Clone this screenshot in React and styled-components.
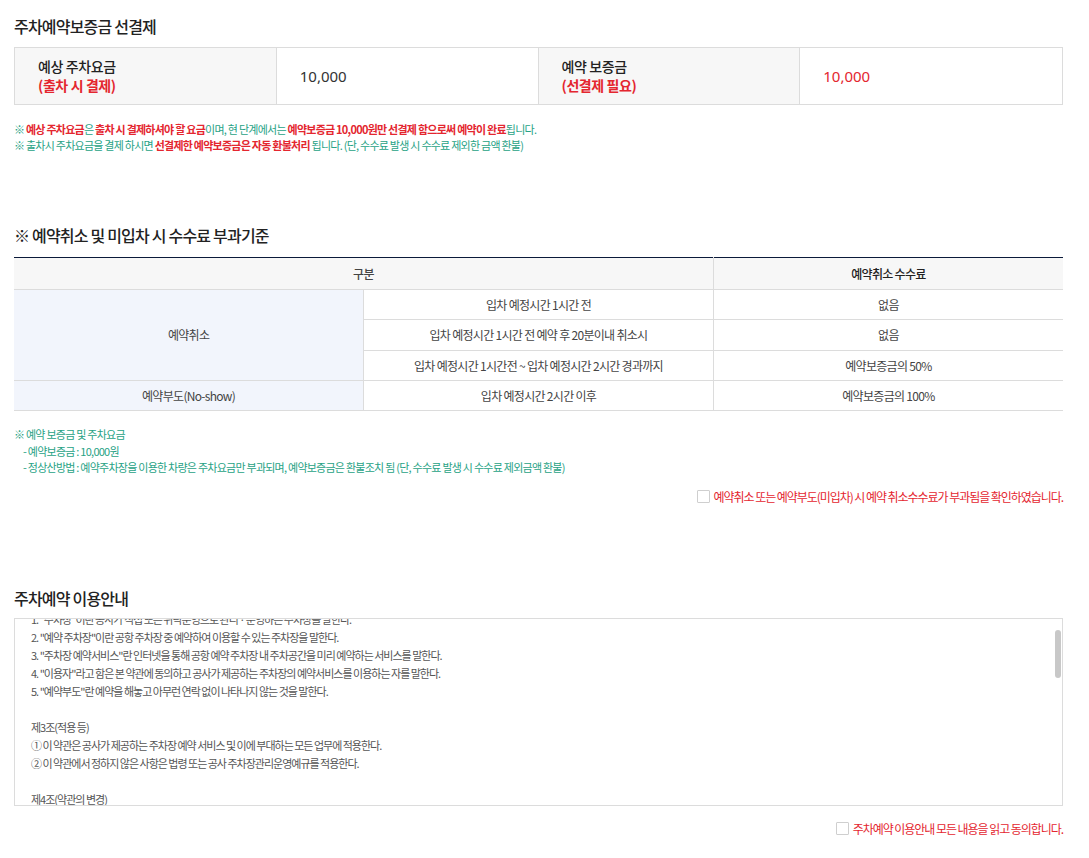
import { useLayoutEffect, useRef } from "react";
import styled, { createGlobalStyle } from "styled-components";

const GlobalStyle = createGlobalStyle`
  html, body {
    margin: 0;
    padding: 0;
    background: #fff;
  }
  body {
    font-family: "Noto Sans CJK KR", "Noto Sans", sans-serif;
    color: #222;
  }
`;

const RED = "#e4262f";
const GREEN = "#27a285";

const Page = styled.div`
  width: 1049px;
  padding: 15px 26px 20px 14px;
`;

const SectionTitle = styled.h2`
  margin: ${(p) => p.$top || 0}px 0 0;
  font-size: 16px;
  font-weight: 500;
  line-height: 22px;
  color: #222;
  letter-spacing: -0.8px;
`;

const PayTable = styled.div`
  margin-top: 10px;
  display: grid;
  grid-template-columns: repeat(4, 1fr);
  border: 1px solid #dcdcdc;
  height: 56px;
`;

const PayLabel = styled.div`
  background: #f7f7f7;
  border-right: 1px solid #dcdcdc;
  padding-left: 23px;
  display: flex;
  flex-direction: column;
  justify-content: center;
  font-size: 14px;
  line-height: 19px;
  color: #222;
  font-weight: 500;
  letter-spacing: -0.4px;
`;

const PayLabelSub = styled.span`
  color: ${RED};
  font-weight: 700;
`;

const PayValue = styled.div`
  padding-left: 23px;
  display: flex;
  align-items: center;
  font-size: 15px;
  color: ${(p) => (p.$red ? RED : "#333")};
  border-right: ${(p) => (p.$last ? "none" : "1px solid #dcdcdc")};
  font-family: "Noto Sans", sans-serif;
`;

const NoteBlock = styled.div`
  margin-top: ${(p) => p.$top || 0}px;
  font-size: 11px;
  line-height: ${(p) => p.$lh || 16}px;
  color: ${GREEN};
  letter-spacing: -0.75px;
`;

const NoteLine = styled.div`
  padding-left: ${(p) => (p.$indent ? 9 : 0)}px;
`;

const Em = styled.span`
  color: ${RED};
  font-weight: 700;
`;

const FeeTable = styled.table`
  margin-top: 11px;
  width: 100%;
  border-collapse: collapse;
  table-layout: fixed;
  border-top: 1px solid #0b1a3a;
  font-size: 12px;
  color: #444;
  letter-spacing: -0.7px;
`;

const Th = styled.th`
  height: 31px;
  background: #f7f7f7;
  font-weight: 500;
  color: ${(p) => (p.$strong ? "#222" : "#444")};
  border-bottom: 1px solid #dcdcdc;
  border-left: ${(p) => (p.$divider ? "1px solid #dcdcdc" : "none")};
  padding: 0;
`;

const Td = styled.td`
  height: 29.3px;
  text-align: center;
  padding: 0;
  border-bottom: 1px solid #dcdcdc;
  border-left: ${(p) => (p.$divider ? "1px solid #dcdcdc" : "none")};
  background: ${(p) => (p.$head ? "#f2f5fc" : "#fff")};
`;

const AgreeRow = styled.label`
  margin-top: ${(p) => p.$top || 0}px;
  display: flex;
  justify-content: flex-end;
  align-items: center;
  gap: 4px;
  font-size: 12px;
  color: ${RED};
  letter-spacing: -1.05px;
  cursor: pointer;
`;

const CheckBox = styled.input.attrs({ type: "checkbox" })`
  appearance: none;
  margin: 0;
  width: 13px;
  height: 13px;
  border: 1px solid #cfcfcf;
  background: #fff;
  border-radius: 1px;
`;

const TermsWrap = styled.div`
  position: relative;
  margin-top: 9px;
`;

const TermsBox = styled.div`
  box-sizing: border-box;
  height: 188px;
  border: 1px solid #dcdcdc;
  overflow-y: auto;
  padding: 10px 16px 10px;
  font-size: 11px;
  line-height: 18px;
  color: #555;
  letter-spacing: -1px;
  scrollbar-width: none;
  &::-webkit-scrollbar {
    display: none;
  }
`;

const ScrollThumb = styled.div`
  position: absolute;
  top: 12px;
  right: 2px;
  width: 6px;
  height: 48px;
  border-radius: 3px;
  background: #c8c8c8;
`;

const TermLine = styled.div`
  min-height: 18px;
  white-space: pre;
`;

const terms = [
  "제1조(목적)",
  "이 약관은 한국공항공사(이하 \"공사\"라 한다)가 제공하는 주차장 예약서비스의 이용조건 및 절차에 관한 사항을 규정함을 목적으로 한다.",
  "",
  "제2조(정의)",
  "이 약관에서 사용하는 용어의 정의는 다음과 같다.",
  "1. \"주차장\"이란 공사가 직접 또는 위탁운영으로 관리 · 운영하는 주차장을 말한다.",
  "2. \"예약 주차장\"이란 공항 주차장 중 예약하여 이용할 수 있는 주차장을 말한다.",
  "3. \"주차장 예약서비스\"란 인터넷을 통해 공항 예약 주차장 내 주차공간을 미리 예약하는 서비스를 말한다.",
  "4. \"이용자\"라고 함은 본 약관에 동의하고 공사가 제공하는 주차장의 예약서비스를 이용하는 자를 말한다.",
  "5. \"예약부도\"란 예약을 해놓고 아무런 연락 없이 나타나지 않는 것을 말한다.",
  "",
  "제3조(적용 등)",
  "① 이 약관은 공사가 제공하는 주차장 예약 서비스 및 이에 부대하는 모든 업무에 적용한다.",
  "② 이 약관에서 정하지 않은 사항은 법령 또는 공사 주차장관리운영예규를 적용한다.",
  "",
  "제4조(약관의 변경)",
  "① 공사는 필요하다고 인정되는 경우 이 약관을 변경할 수 있으며, 변경된 약관은 홈페이지에 공지한다.",
  "② 변경된 약관은 공지한 날로부터 7일이 경과한 후 효력이 발생한다.",
  "",
  "제5조(예약 신청)",
  "① 이용자는 공사가 정한 절차에 따라 예약을 신청하여야 한다.",
  "② 예약은 입차 예정일 기준 30일 전부터 1일 전까지 신청할 수 있다.",
  "③ 1대의 차량은 동일 기간에 1건의 예약만 신청할 수 있다.",
  "",
  "제6조(예약보증금)",
  "① 이용자는 예약 신청 시 예약보증금을 선결제하여야 하며, 선결제가 완료되어야 예약이 확정된다.",
  "② 예약보증금은 출차 시 주차요금을 결제하면 자동 환불된다.",
  "",
  "제7조(예약 취소)",
  "① 이용자는 입차 예정시간 1시간 전까지 수수료 없이 예약을 취소할 수 있다.",
  "② 입차 예정시간 1시간 전 이후의 취소는 예약보증금의 50%를 수수료로 부과한다.",
  "③ 예약부도(No-show)의 경우 예약보증금의 100%를 수수료로 부과한다.",
  "",
  "제8조(주차요금)",
  "① 주차요금은 공사 주차장관리운영예규에서 정한 요금을 적용한다.",
  "② 주차요금은 출차 시 정산한다.",
  "",
  "제9조(이용자의 의무)",
  "① 이용자는 예약 주차장 이용 시 주차장 내 안내 및 질서유지에 협조하여야 한다.",
  "② 이용자는 예약 정보를 정확하게 입력하여야 하며, 잘못된 정보로 인한 불이익은 이용자가 부담한다.",
  "",
  "제10조(서비스의 제한)",
  "① 공사는 천재지변, 시설 공사 등 불가피한 사유가 있는 경우 서비스를 제한할 수 있다.",
  "② 제1항의 경우 공사는 이용자에게 사전에 통지하며, 선결제한 예약보증금은 전액 환불한다.",
  "",
  "제11조(면책)",
  "① 공사는 이용자의 귀책사유로 인한 서비스 이용 장애에 대하여 책임을 지지 아니한다.",
  "② 주차장 내 차량 도난 및 파손 등에 관하여는 관계 법령에 따른다.",
  "",
  "부칙",
  "이 약관은 공지한 날부터 시행한다.",
];

export default function App() {
  const boxRef = useRef(null);

  // the reference is scrolled a little into the terms
  useLayoutEffect(() => {
    if (boxRef.current) boxRef.current.scrollTop = 109;
  }, []);

  return (
    <Page>
      <GlobalStyle />
      <SectionTitle>주차예약보증금 선결제</SectionTitle>
      <PayTable>
        <PayLabel>
          예상 주차요금
          <PayLabelSub>(출차 시 결제)</PayLabelSub>
        </PayLabel>
        <PayValue>10,000</PayValue>
        <PayLabel>
          예약 보증금
          <PayLabelSub>(선결제 필요)</PayLabelSub>
        </PayLabel>
        <PayValue $red $last>
          10,000
        </PayValue>
      </PayTable>

      <NoteBlock $top={16}>
        <NoteLine>
          ※ <Em>예상 주차요금</Em>은 <Em>출차 시 결제하셔야 할 요금</Em>이며, 현 단계에서는{" "}
          <Em>예약보증금 10,000원만 선결제 함으로써 예약이 완료</Em>됩니다.
        </NoteLine>
        <NoteLine>
          ※ 출차시 주차요금을 결제 하시면 <Em>선결제한 예약보증금은 자동 환불처리</Em> 됩니다. (단,
          수수료 발생 시 수수료 제외한 금액 환불)
        </NoteLine>
      </NoteBlock>

      <SectionTitle $top={71}>※ 예약취소 및 미입차 시 수수료 부과기준</SectionTitle>
      <FeeTable>
        <thead>
          <tr>
            <Th colSpan={2}>구분</Th>
            <Th $divider $strong>
              예약취소 수수료
            </Th>
          </tr>
        </thead>
        <tbody>
          <tr>
            <Td rowSpan={3} $head>
              예약취소
            </Td>
            <Td $divider>입차 예정시간 1시간 전</Td>
            <Td $divider>없음</Td>
          </tr>
          <tr>
            <Td $divider>입차 예정시간 1시간 전 예약 후 20분이내 취소시</Td>
            <Td $divider>없음</Td>
          </tr>
          <tr>
            <Td $divider>입차 예정시간 1시간전 ~ 입차 예정시간 2시간 경과까지</Td>
            <Td $divider>예약보증금의 50%</Td>
          </tr>
          <tr>
            <Td $head>예약부도(No-show)</Td>
            <Td $divider>입차 예정시간 2시간 이후</Td>
            <Td $divider>예약보증금의 100%</Td>
          </tr>
        </tbody>
      </FeeTable>

      <NoteBlock $top={15} $lh={16.5}>
        <NoteLine>※ 예약 보증금 및 주차요금</NoteLine>
        <NoteLine $indent>- 예약보증금 : 10,000원</NoteLine>
        <NoteLine $indent>
          - 정상산방법 : 예약주차장을 이용한 차량은 주차요금만 부과되며, 예약보증금은 환불조치 됨 (단,
          수수료 발생 시 수수료 제외금액 환불)
        </NoteLine>
      </NoteBlock>

      <AgreeRow $top={12}>
        <CheckBox />
        예약취소 또는 예약부도(미입차) 시 예약 취소수수료가 부과됨을 확인하였습니다.
      </AgreeRow>

      <SectionTitle $top={82}>주차예약 이용안내</SectionTitle>
      <TermsWrap>
        <TermsBox ref={boxRef}>
          {terms.map((t, i) => (
            <TermLine key={i}>{t}</TermLine>
          ))}
        </TermsBox>
        <ScrollThumb />
      </TermsWrap>

      <AgreeRow $top={14}>
        <CheckBox />
        주차예약 이용안내 모든 내용을 읽고 동의합니다.
      </AgreeRow>
    </Page>
  );
}
